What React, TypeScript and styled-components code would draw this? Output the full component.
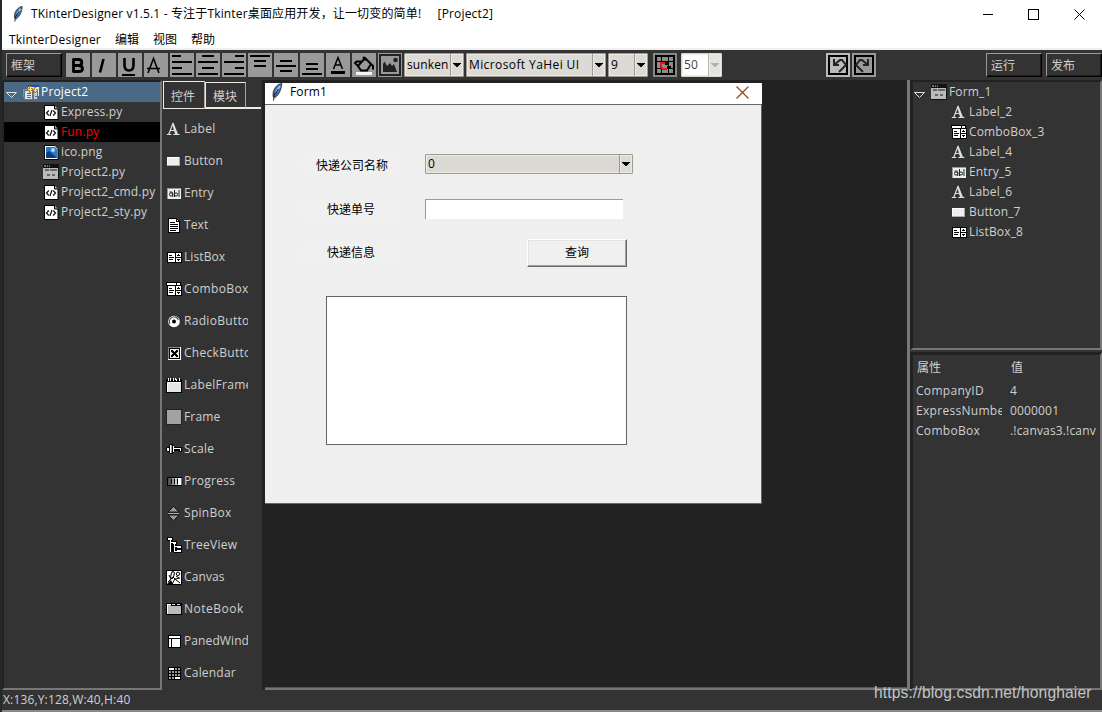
import React from "react";
import styled, { createGlobalStyle } from "styled-components";

const UI = `"Open Sans", "Noto Sans CJK SC", sans-serif`;

const Global = createGlobalStyle`
  * { box-sizing: border-box; }
  body { margin: 0; background: #333; overflow: hidden; }
`;

const Window = styled.div`
  position: relative;
  width: 1102px;
  height: 712px;
  display: flex;
  flex-direction: column;
  border-left: 2px solid #26292c;
  background: #333;
  font: 12px/20px ${UI};
  color: #d0d0d0;
  overflow: hidden;
`;
const Text = styled.span<{ $ls?: number }>`
  white-space: pre;
  letter-spacing: ${(p) => p.$ls ?? 0.16}px;
`;
const TitleBar = styled.header`
  display: flex;
  align-items: center;
  height: 28px;
  padding: 0 17px 0 9px;
  background: #fff;
  color: #000;
  gap: 6px;
`;
const Controls = styled.div`
  display: flex;
  gap: 35px;
  margin-left: auto;
`;
const MenuBar = styled.nav`
  display: flex;
  align-items: center;
  height: 22px;
  padding: 4px 7px 0;
  gap: 14px;
  background: #fff;
  border-bottom: 2px solid #f0f0f0;
  color: #000;
`;
const Toolbar = styled.div`
  display: flex;
  align-items: center;
  height: 30px;
  padding: 0 0 0 4px;
  gap: 2px;
`;
const Gap = styled.div<{ $w: number }>`
  flex: none;
  width: ${(p) => p.$w}px;
`;
const RaisedButton = styled.div`
  flex: none;
  width: 56px;
  height: 24px;
  padding-left: 4px;
  line-height: 23px;
  border: 1px solid #999;
  border-right-color: #000;
  border-bottom-color: #000;
  box-shadow: inset -1px -1px #1c1c1c;
`;
const Tool = styled.div<{ $bg?: string }>`
  flex: none;
  width: 24px;
  height: 24px;
  background: ${(p) => p.$bg ?? "#999"};
  svg { display: block; }
`;
const Combo = styled.div<{ $w: number; $h?: number; $disabled?: boolean }>`
  flex: none;
  display: flex;
  width: ${(p) => p.$w}px;
  height: ${(p) => p.$h ?? 24}px;
  border: 1px solid ${(p) => (p.$disabled ? "#d8d6d0" : "#9e9a91")};
  border-radius: 1px;
  background: ${(p) => (p.$disabled ? "#fff" : "#dcdad5")};
  color: ${(p) => (p.$disabled ? "#444" : "#000")};
  box-shadow: inset 0 0 0 1px #eeebe7;
`;
const ComboText = styled.div<{ $h?: number }>`
  flex: 1;
  overflow: hidden;
  padding-left: 2px;
  line-height: ${(p) => (p.$h ?? 24) - 2}px;
  margin-right: 1px;
`;
const ComboArrow = styled.div<{ $disabled?: boolean }>`
  width: 13px;
  border-left: 1px solid #9e9a91;
  box-shadow: inset 0 0 0 1px #eeebe7;
  background: #dcdad5;
  display: flex;
  align-items: center;
  justify-content: center;
  opacity: ${(p) => (p.$disabled ? 0.75 : 1)};
  color: ${(p) => (p.$disabled ? "#999" : "#000")};
  svg { margin-right: 1px; }
`;
const Workspace = styled.main`
  display: flex;
  height: 610px;
`;
const ProjectPane = styled.aside`
  width: 160px;
  border: 2px solid #222;
  border-right-color: #777;
  border-bottom-color: #777;
`;
const Row = styled.div<{ $bg?: string; $color?: string; $pad: number }>`
  display: flex;
  align-items: center;
  height: 20px;
  padding-left: ${(p) => p.$pad}px;
  gap: 2px;
  background: ${(p) => p.$bg ?? "transparent"};
  color: ${(p) => p.$color ?? "#d0d0d0"};
  svg { flex: none; }
`;
const Toolbox = styled.section`
  width: 100px;
  padding-top: 1px;
`;
const Tabs = styled.div`
  display: flex;
  align-items: flex-end;
  height: 28px;
  padding-left: 1px;
`;
const Tab = styled.div<{ $active?: boolean }>`
  width: ${(p) => (p.$active ? 42 : 41)}px;
  height: ${(p) => (p.$active ? 28 : 27)}px;
  line-height: ${(p) => (p.$active ? 29 : 27)}px;
  padding-left: 7px;
  border: 1px solid #eeebe7;
  border-right-color: #aaa69d;
  ${(p) => !p.$active && "border-bottom-width: 2px;"}
`;
const TabLine = styled.div`
  flex: 1;
  height: 2px;
  background: #eeebe7;
  margin-right: 1px;
`;
const PaletteList = styled.div`
  padding-top: 4px;
`;
const PaletteItem = styled.div`
  display: flex;
  align-items: center;
  height: 32px;
  padding-left: 4px;
  gap: 2px;
  svg { flex: none; }
`;
const Clip = styled.div<{ $w: number }>`
  width: ${(p) => p.$w}px;
  overflow: hidden;
  white-space: nowrap;
`;
const Canvas = styled.section`
  width: 648px;
  padding: 3px 0 0 3px;
  background: #222;
  border-right: 3px solid #777;
  display: flex;
  flex-direction: column;
  justify-content: space-between;
`;
const CanvasEdge = styled.div`
  height: 3px;
  background: linear-gradient(#555 1px, #777 1px);
`;
const FormWindow = styled.div`
  width: 497px;
  height: 421px;
  background: #efefef;
  color: #000;
  border-bottom: 1px solid #666;
`;
const FormTitle = styled.div`
  display: flex;
  align-items: center;
  justify-content: space-between;
  height: 22px;
  padding: 0 13px 3px 5px;
  background: #fff;
  border-bottom: 1px solid #666;
`;
const FormCaption = styled.div`
  display: flex;
  align-items: center;
  gap: 6px;
`;
const FormBody = styled.div`
  height: 398px;
  border-right: 1px solid #666;
  padding: 49px 0 0 36px;
`;
const FormRow = styled.div<{ $h: number; $mb: number }>`
  display: flex;
  align-items: center;
  height: ${(p) => p.$h}px;
  margin-bottom: ${(p) => p.$mb}px;
`;
const FormLabel = styled.div<{ $mr: number; $drop?: number; $indent?: number }>`
  width: 100px;
  height: 20px;
  line-height: 20px;
  padding-top: ${(p) => p.$drop ?? 0}px;
  padding-left: ${(p) => p.$indent ?? 0}px;
  text-align: center;
  background: #f0f0f0;
  margin-right: ${(p) => p.$mr}px;
`;
const EntryField = styled.div`
  width: 198px;
  height: 20px;
  background: #fff;
  border: solid #999;
  border-width: 1px 0 0 1px;
`;
const PushButton = styled.div`
  width: 100px;
  height: 28px;
  line-height: 26px;
  text-align: center;
  background: #f0f0f0;
  border: 1px solid #fff;
  border-right-color: #696969;
  border-bottom-color: #696969;
  box-shadow: inset -1px -1px #a0a0a0, inset 1px 1px #e3e3e3;
`;
const ListField = styled.div`
  width: 301px;
  height: 149px;
  margin-left: 25px;
  background: #fff;
  border: 1px solid #646464;
`;
const Side = styled.aside`
  width: 192px;
  display: flex;
  flex-direction: column;
  gap: 2px;
`;
const SidePane = styled.div<{ $h: number; $top: number }>`
  height: ${(p) => p.$h}px;
  border: solid #222;
  border-width: ${(p) => p.$top}px 2px 2px 3px;
  border-right-color: #777;
  border-bottom-color: #777;
`;
const PropRow = styled.div<{ $head?: boolean }>`
  display: grid;
  grid-template-columns: 86px 87px;
  column-gap: 8px;
  padding-left: ${(p) => (p.$head ? 4 : 3)}px;
  height: ${(p) => (p.$head ? 26 : 20)}px;
  line-height: ${(p) => (p.$head ? 26 : 20)}px;
`;
const StatusBar = styled.footer`
  height: 22px;
  padding-left: 1px;
  line-height: 19px;
  border-bottom: 2px solid #888;
`;
const Watermark = styled.div`
  position: absolute;
  left: 872px;
  top: 683px;
  font: 15.6px/20px "Liberation Sans", sans-serif;
  letter-spacing: 0.14px;
  color: #c4c4c4;
  white-space: nowrap;
`;

const Svg = ({ w = 16, h = 16, smooth, children }: { w?: number; h?: number; smooth?: boolean; children: React.ReactNode }) => (
  <svg width={w} height={h} viewBox={`0 0 ${w} ${h}`} fill="none" shapeRendering={smooth ? "auto" : "crispEdges"}>
    {children}
  </svg>
);

const Feather = ({ h = 18 }: { h?: number }) => (
  <svg width="14" height={h} viewBox="0 0 14 18" fill="none">
    <path d="M11.8 0.5C8 1 4.500 4 3.200 9L3 13.500L5 14.500C9 12 11.500 6 11.800 0.500Z" fill="#3e6faa" stroke="#25272b" strokeWidth="0.800" />
    <path d="M10 3L6 9" stroke="#9cc3ea" strokeWidth="2" />
    <path d="M8.500 6L4.200 12L3.500 17.500" stroke="#16181c" strokeWidth="1" />
  </svg>
);

const Caret = () => (
  <Svg w={8} h={5}>
    <path d="M0 0H8V1H7V2H6V3H5V4H3V3H2V2H1V1H0Z" fill="currentColor" />
  </Svg>
);

const Expander = () => (
  <svg width="12" height="20" viewBox="0 0 12 20" fill="none">
    <path d="M0.500 10.500H10.500L5.500 15.500Z" stroke="#e0e0e0" />
  </svg>
);

const icons: Record<string, React.ReactNode> = {
  project: (
    <Svg>
      <path d="M5 1H16V12H5Z" fill="#dfe8f4" />
      <path d="M5 1H16V3H5Z" fill="#1d4bb5" />
      <path d="M0 5H9V13H0Z" fill="#8292a5" />
      <path d="M1.500 6.500H9.500V15.500H1.500Z" fill="#dce6f0" stroke="#637383" />
      <path d="M10.500 7.500H14.500V15.500H10.500Z" fill="#c8ccd4" stroke="#637383" />
      <path d="M4 9.500H8M4 11.500H8M4 13.500H8M12 12.500H14" stroke="#5c708c" />
      <path d="M7 2V9M4 5H10M12 3V9M10 6H15" stroke="#c5850a" strokeWidth="2" />
      <path d="M7.500 3V8M5 5.500H9M12.500 4V8M11 6.500H14" stroke="#ffe477" />
    </Svg>
  ),
  code: (
    <Svg smooth>
      <path d="M1.500 1.500H11.500L15 5V15.500H1.500Z" fill="#fff" stroke="#000" />
      <path d="M11.500 1V5H15" fill="#aaa" stroke="#000" />
      <path d="M5.800 6.500L3.500 9L5.800 11.500M10.200 6.500L12.500 9L10.200 11.500M9 6L7 12" stroke="#111" strokeWidth="1.200" />
    </Svg>
  ),
  image: (
    <Svg smooth>
      <path d="M1.500 1.500H12L15 4.500V15.500H1.500Z" fill="#fff" stroke="#000" />
      <path d="M3 3H12L14 5V14H3Z" fill="#2a78c8" />
      <path d="M3 9L6 7L14 14H3Z" fill="#0a3a86" />
      <circle cx="10" cy="6" r="2" fill="#a8dcff" />
    </Svg>
  ),
  form: (
    <Svg>
      <path d="M0 0H16V16H0Z" fill="#111" />
      <path d="M1 1H3V3H1ZM4 1H5V3H4ZM6 1H7V3H6Z" fill="#777" />
      <path d="M0 4H15V15H0Z" fill="#bbb" />
      <path d="M2 5H6V7H2ZM7 5H14V7H7ZM4 10H7V12H4ZM9 10H12V12H9Z" fill="#666" />
    </Svg>
  ),
  Label: (
    <Svg smooth>
      <path d="M0.800 13.500H5.300M7.300 13.500H13.500" stroke="#ddd" strokeWidth="1.200" />
      <path d="M2.700 13.500L6.700 3M4.400 9.500H8.900" stroke="#ddd" strokeWidth="1.200" />
      <path d="M5.900 2.500L7.400 1.500L12.200 13.500H9.200Z" fill="#ddd" />
    </Svg>
  ),
  Button: (
    <Svg>
      <path d="M1 4H14V13H1Z" fill="#eee" />
      <path d="M1 12.500H14M13.500 4V13" stroke="#aaa" />
      <path d="M1 4.500H13M1.500 4V12" stroke="#fff" />
    </Svg>
  ),
  Entry: (
    <Svg smooth>
      <path d="M1 3H15V14H1Z" fill="#eee" />
      <path d="M1 3.500H15M1.500 3V14" stroke="#999" />
      <circle cx="5" cy="9.500" r="1.600" stroke="#222" />
      <path d="M3.500 7H5.500Q6.800 7 6.800 8.500V12M8.500 5V12M13 5V12" stroke="#222" />
      <circle cx="10" cy="9.500" r="1.600" stroke="#222" />
    </Svg>
  ),
  Text: (
    <Svg>
      <path d="M2.500 1.500H10.500L13.500 4.500V15.500H2.500Z" fill="#fff" stroke="#000" />
      <path d="M10.500 1V4.500H14" stroke="#000" />
      <path d="M4 5.500H9M4 7.500H12M4 9.500H12M4 11.500H12M4 13.500H10" stroke="#000" />
    </Svg>
  ),
  ListBox: (
    <Svg>
      <path d="M1 3H16V14H1Z" fill="#000" />
      <path d="M2 4H9V13H2ZM10 4H15V8H10ZM10 9H15V13H10Z" fill="#fff" />
      <path d="M3 6.500H6M3 8.500H8M3 10.500H7M11 6.500H14M12 5.500H13M11 10.500H14M12 11.500H13" stroke="#000" />
    </Svg>
  ),
  ComboBox: (
    <Svg>
      <path d="M0 1H15V4H16V15H1V4H0Z" fill="#000" />
      <path d="M1 2H10V4H1ZM11 2H14V4H11ZM2 5H9V14H2ZM10 5H15V9H10ZM10 10H15V14H10Z" fill="#fff" />
      <path d="M3 7.500H6M3 9.500H8M3 11.500H7M11 7.500H14M12 6.500H13M11 11.500H14M12 12.500H13" stroke="#000" />
    </Svg>
  ),
  RadioButton: (
    <Svg smooth>
      <circle cx="8" cy="8.500" r="5.800" fill="#fff" />
      <circle cx="8" cy="8.500" r="4.600" stroke="#333" strokeWidth="0.900" strokeDasharray="15 14" transform="rotate(150 8 8.500)" />
      <circle cx="8" cy="8.500" r="2" fill="#000" />
    </Svg>
  ),
  CheckButton: (
    <Svg>
      <path d="M2 2H15V15H2Z" fill="#fff" />
      <path d="M2 2.500H14M2.500 2V14" stroke="#888" />
      <path d="M3.500 3.500H13.500V13.500H3.500Z" fill="#eee" stroke="#000" />
      <path d="M5 5H7V6H8V7H9V6H10V5H12V7H11V8H10V9H11V10H12V12H10V11H9V10H8V11H7V12H5V10H6V9H7V8H6V7H5Z" fill="#000" />
    </Svg>
  ),
  LabelFrame: (
    <Svg>
      <path d="M0 2H16V16H0Z" fill="#000" />
      <path d="M1 5H15V15H1Z" fill="#e4e4e4" />
      <path d="M1 5.500H15M1.500 5V15" stroke="#fff" />
      <path d="M2 1L3 4M5 1L4 4M7 1V4M9 1L11 4M13 1V4" stroke="#fff" />
    </Svg>
  ),
  Frame: (
    <Svg><path d="M0.500 0.500H15.500V15.500H0.500Z" fill="#a2a2a2" stroke="#222" /></Svg>
  ),
  Scale: (
    <Svg>
      <path d="M1 6H3V4H4V3H7V4H8V6H16V11H13V10H8V12H7V13H4V12H3V11H1V10H0V7H1Z" fill="#000" />
      <path d="M4 4H5V12H4ZM1 7H3V10H1Z" fill="#fff" />
      <path d="M5 4H6V12H5Z" fill="#999" />
      <path d="M7 5H8V11H7ZM8 7H15V10H14V8H8Z" fill="#fff" />
    </Svg>
  ),
  Progress: (
    <Svg>
      <path d="M1 4H16V13H1Z" fill="#000" />
      <path d="M2 5.500H15V11.500H2" stroke="#777" />
      <path d="M2 5H5V12H2Z" fill="#555" />
      <path d="M6 5H8V12H6Z" fill="#999" />
      <path d="M9 5H11V12H9Z" fill="#ccc" />
      <path d="M12 5H15V12H12Z" fill="#fff" />
    </Svg>
  ),
  SpinBox: (
    <Svg smooth>
      <path d="M7.500 1.500L13 7H2ZM2 10H13L7.500 15.500Z" fill="#999" stroke="#151515" />
      <path d="M2 8.500H13" stroke="#aaa" />
    </Svg>
  ),
  TreeView: (
    <Svg>
      <path d="M1 0H7V4H11V8H16V16H8V15H4V4H1Z" fill="#000" />
      <path d="M2 1H6V3H2ZM7 5H10V7H7ZM11 9H15V11H11ZM11 13H15V15H11Z" fill="#fff" />
      <path d="M4.500 3V14.500M4 5.500H7M8.500 7V14.500M8 9.500H11M8 14.500H11" stroke="#fff" />
    </Svg>
  ),
  Canvas: (
    <Svg smooth>
      <path d="M0.500 1.500H15.500V15.500H0.500Z" fill="#fff" stroke="#000" />
      <circle cx="12" cy="4.800" r="1.700" stroke="#000" />
      <ellipse cx="6.500" cy="6" rx="1.500" ry="3.500" stroke="#000" transform="rotate(15 6.500 6)" />
      <path d="M2 13L7 8L9 10L14 9M3 6L5 10M6 15L9 10L14 14M10 7L13 9" stroke="#000" />
      <path d="M1 15L5 11L7 15Z" fill="#000" />
    </Svg>
  ),
  NoteBook: (
    <Svg>
      <path d="M0 2H16V14H0Z" fill="#000" />
      <path d="M1 3H5V5H15V13H1Z" fill="#bbb" />
      <path d="M6 3H9V4H6ZM11 3H14V4H11Z" fill="#ddd" />
      <path d="M1 3.500H5M1.500 3V13" stroke="#fff" />
    </Svg>
  ),
  PanedWindow: (
    <Svg>
      <path d="M2 2H15V15H2Z" fill="#000" />
      <path d="M3 3H14V5H3ZM3 6H5V14H3ZM6 6H14V14H6Z" fill="#fff" />
    </Svg>
  ),
  Calendar: (
    <Svg>
      <path d="M2 2H15V15H2Z" fill="#000" />
      <path d="M3 4H14M3 7H14M3 10H14M3 13H14" stroke="#999" strokeWidth="2" strokeDasharray="2 1" />
      <path d="M3 3H8V5H3ZM9 12H14V14H9Z" fill="#fff" />
    </Svg>
  ),
};

const LineTool = ({ d }: { d: string }) => (
  <Tool>
    <Svg w={24} h={24}><path d={d} stroke="#000" strokeWidth="2" /></Svg>
  </Tool>
);

const ComboBox = ({ w, h, text, ls, disabled }: { w: number; h?: number; text: string; ls?: number; disabled?: boolean }) => (
  <Combo $w={w} $h={h} $disabled={disabled}>
    <ComboText $h={h}><Text $ls={ls}>{text}</Text></ComboText>
    <ComboArrow $disabled={disabled}><Caret /></ComboArrow>
  </Combo>
);

const files = [
  { icon: "code", name: "Express.py" },
  { icon: "code", name: "Fun.py", active: true },
  { icon: "image", name: "ico.png" },
  { icon: "form", name: "Project2.py" },
  { icon: "code", name: "Project2_cmd.py" },
  { icon: "code", name: "Project2_sty.py" },
];
const palette: { name: string; label?: string; ls?: number }[] = [
  { name: "Label" },
  { name: "Button", ls: 0.1 },
  { name: "Entry", ls: 0.1 },
  { name: "Text", ls: 0.1 },
  { name: "ListBox", ls: 0.1 },
  { name: "ComboBox", ls: 0.38 },
  { name: "RadioButton", label: "RadioButto" },
  { name: "CheckButton", label: "CheckButto" },
  { name: "LabelFrame" },
  { name: "Frame", ls: 0.15 },
  { name: "Scale" },
  { name: "Progress" },
  { name: "SpinBox" },
  { name: "TreeView", ls: 0.25 },
  { name: "Canvas", ls: 0.1 },
  { name: "NoteBook", ls: 0.5 },
  { name: "PanedWindow", label: "PanedWind", ls: 0.1 },
  { name: "Calendar", ls: 0.2 },
];
const nodes = ["Label_2", "ComboBox_3", "Label_4", "Entry_5", "Label_6", "Button_7", "ListBox_8"];
const props = [["CompanyID", "4"], ["ExpressNumbe", "0000001"], ["ComboBox", ".!canvas3.!canv"]];

export default function App() {
  return (
    <Window>
      <Global />
      <TitleBar>
        <Feather h={16} />
        <Text $ls={0.155}>TKinterDesigner v1.5.1 - 专注于Tkinter桌面应用开发，让一切变的简单!     [Project2]</Text>
        <Controls>
          <Svg w={11} h={11}><path d="M1 5.500H11" stroke="#000" /></Svg>
          <Svg w={11} h={11}><path d="M0.500 0.500H10.500V10.500H0.500Z" stroke="#000" /></Svg>
          <Svg w={11} h={11} smooth><path d="M0.500 0.500L10.500 10.500M10.500 0.500L0.500 10.500" stroke="#000" /></Svg>
        </Controls>
      </TitleBar>
      <MenuBar>
        <Text $ls={0.2}>TkinterDesigner</Text>
        <Text $ls={0}>编辑</Text>
        <Text $ls={0}>视图</Text>
        <Text $ls={0}>帮助</Text>
      </MenuBar>
      <Toolbar>
        <RaisedButton>框架</RaisedButton>
        <Gap $w={0} />
        <Tool>
          <Svg w={24} h={24} smooth>
            <path d="M7 6.500H12.500Q15.800 6.500 15.800 9.500Q15.800 12.500 12.500 12.500H7M12.500 12.500Q16.500 12.700 16.500 15.700Q16.500 18.500 12.500 18.500H7M7.500 5.500V19.500" stroke="#000" strokeWidth="2.800" />
          </Svg>
        </Tool>
        <Tool>
          <Svg w={24} h={24} smooth><path d="M11.500 6L8 19.500" stroke="#000" strokeWidth="2.600" /></Svg>
        </Tool>
        <Tool>
          <Svg w={24} h={24} smooth>
            <path d="M6.500 5V12Q6.500 17.500 11 17.500Q15.500 17.500 15.500 12V5" stroke="#000" strokeWidth="2.600" />
            <path d="M4 22H17" stroke="#000" strokeWidth="2" />
          </Svg>
        </Tool>
        <Tool>
          <Svg w={24} h={24} smooth><path d="M4 20L9.500 5.500L15 20M3 15.500H16" stroke="#000" strokeWidth="1.600" /></Svg>
        </Tool>
        <LineTool d="M2 3H11M2 9H22M2 15H12M2 21H22" />
        <LineTool d="M6 3H18M2 9H22M6 15H18M2 21H22" />
        <LineTool d="M13 3H22M2 9H22M13 15H22M2 21H22" />
        <LineTool d="M2 3H22M6 8H18M6 13H18" />
        <LineTool d="M6 8H18M2 13H22M6 18H18" />
        <LineTool d="M6 11H18M6 16H18M2 21H22" />
        <Tool>
          <Svg w={24} h={24} smooth>
            <path d="M7.500 16L12 4.500L16.500 16M8.500 12H15.500" stroke="#000" strokeWidth="1.500" />
            <path d="M5 19.500H19" stroke="#000" strokeWidth="3" />
          </Svg>
        </Tool>
        <Tool>
          <Svg w={24} h={24} smooth>
            <path d="M4 19H20V22H4Z" fill="#f4f4f4" />
            <path d="M13 5L19 11L15 17.500H9L6 13ZM9 8.500H4.500L3 10L6 13M11 4L14 7M18 10L21 13V16.500" stroke="#000" strokeWidth="2" />
          </Svg>
        </Tool>
        <Tool>
          <Svg w={24} h={24} smooth>
            <path d="M2 2H22V22H2Z" stroke="#222" strokeWidth="2" />
            <path d="M5 19V11L6.500 8.500L9 13L12 10L14 13L16 11L19 19Z" fill="#222" />
            <circle cx="17.500" cy="7" r="2.300" fill="#222" />
          </Svg>
        </Tool>
        <ComboBox w={60} text="sunken" ls={0.1} />
        <ComboBox w={140} text="Microsoft YaHei UI" ls={0.4} />
        <ComboBox w={40} text="9" />
        <Gap $w={1} />
        <Tool $bg="#888">
          <Svg w={24} h={24}>
            <path d="M3 3H21V21H3Z" fill="#8c8c8c" stroke="#000" strokeWidth="2" />
            <path d="M8.500 3V21M15.500 3V21M3 8.500H21M3 15.500H21" stroke="#000" />
            <path d="M12 10H8V14L10 16H14" stroke="#f01010" strokeWidth="2" />
            <path d="M12 9H15V12H12ZM14 13H18V16H14Z" fill="#000" />
          </Svg>
        </Tool>
        <Gap $w={0} />
        <ComboBox w={41} text="50" disabled />
        <Gap $w={100} />
        <Tool $bg="#bbb">
          <Svg w={24} h={24} smooth>
            <path d="M3 3H21V21H3Z" stroke="#000" strokeWidth="2" />
            <path d="M8 6V12H13M8 12L14 7H16L20 12L13 19" stroke="#222" strokeWidth="2" />
          </Svg>
        </Tool>
        <Tool>
          <Svg w={24} h={24} smooth>
            <path d="M3 3H21V21H3Z" stroke="#000" strokeWidth="2" />
            <path d="M16 6V12H11M16 12L10 7H8L4 12L11 19" stroke="#222" strokeWidth="2" />
          </Svg>
        </Tool>
        <Gap $w={106} />
        <RaisedButton>运行</RaisedButton>
        <Gap $w={0} />
        <RaisedButton>发布</RaisedButton>
      </Toolbar>
      <Workspace>
        <ProjectPane>
          <Row $pad={2} $bg="#4a6984" $color="#fff">
            <Expander />
            <Gap $w={1} />
            {icons.project}
            <Text>Project2</Text>
          </Row>
          {files.map((f) => (
            <Row key={f.name} $pad={39} $bg={f.active ? "#000" : undefined} $color={f.active ? "#f00" : undefined}>
              {icons[f.icon]}
              <Text>{f.name}</Text>
            </Row>
          ))}
        </ProjectPane>
        <Toolbox>
          <Tabs>
            <Tab $active>控件</Tab>
            <Tab>模块</Tab>
            <TabLine />
          </Tabs>
          <PaletteList>
            {palette.map((p) => (
              <PaletteItem key={p.name}>
                {icons[p.name]}
                <Clip $w={64}><Text $ls={p.ls ?? 0.3}>{p.label ?? p.name}</Text></Clip>
              </PaletteItem>
            ))}
          </PaletteList>
        </Toolbox>
        <Canvas>
          <FormWindow>
            <FormTitle>
              <FormCaption>
                <Feather />
                <Text>Form1</Text>
              </FormCaption>
              <Svg w={13} h={13} smooth><path d="M0.500 0.500L12.500 12.500M12.500 0.500L0.500 12.500" stroke="#8b4a1c" strokeWidth="1.200" /></Svg>
            </FormTitle>
            <FormBody>
              <FormRow $h={20} $mb={25}>
                <FormLabel $mr={24} $drop={2} $indent={2}>快递公司名称</FormLabel>
                <ComboBox w={208} h={20} text="0" />
              </FormRow>
              <FormRow $h={20} $mb={20}>
                <FormLabel $mr={24} $drop={1}>快递单号</FormLabel>
                <EntryField />
              </FormRow>
              <FormRow $h={28} $mb={29}>
                <FormLabel $mr={126}>快递信息</FormLabel>
                <PushButton>查询</PushButton>
              </FormRow>
              <ListField />
            </FormBody>
          </FormWindow>
          <CanvasEdge />
        </Canvas>
        <Side>
          <SidePane $h={270} $top={2}>
            <Row $pad={1}>
              <Expander />
              <Gap $w={1} />
              {icons.form}
              <Text>Form_1</Text>
            </Row>
            {nodes.map((n) => (
              <Row key={n} $pad={38}>
                {icons[n.split("_")[0]]}
                <Text>{n}</Text>
              </Row>
            ))}
          </SidePane>
          <SidePane $h={338} $top={3}>
            <PropRow $head><span>属性</span><span>值</span></PropRow>
            {props.map(([k, v]) => (
              <PropRow key={k}>
                <Clip $w={86}><Text $ls={0.3}>{k}</Text></Clip>
                <Clip $w={87}><Text>{v}</Text></Clip>
              </PropRow>
            ))}
          </SidePane>
        </Side>
      </Workspace>
      <StatusBar><Text>X:136,Y:128,W:40,H:40</Text></StatusBar>
      <Watermark>https://blog.csdn.net/honghaier</Watermark>
    </Window>
  );
}
